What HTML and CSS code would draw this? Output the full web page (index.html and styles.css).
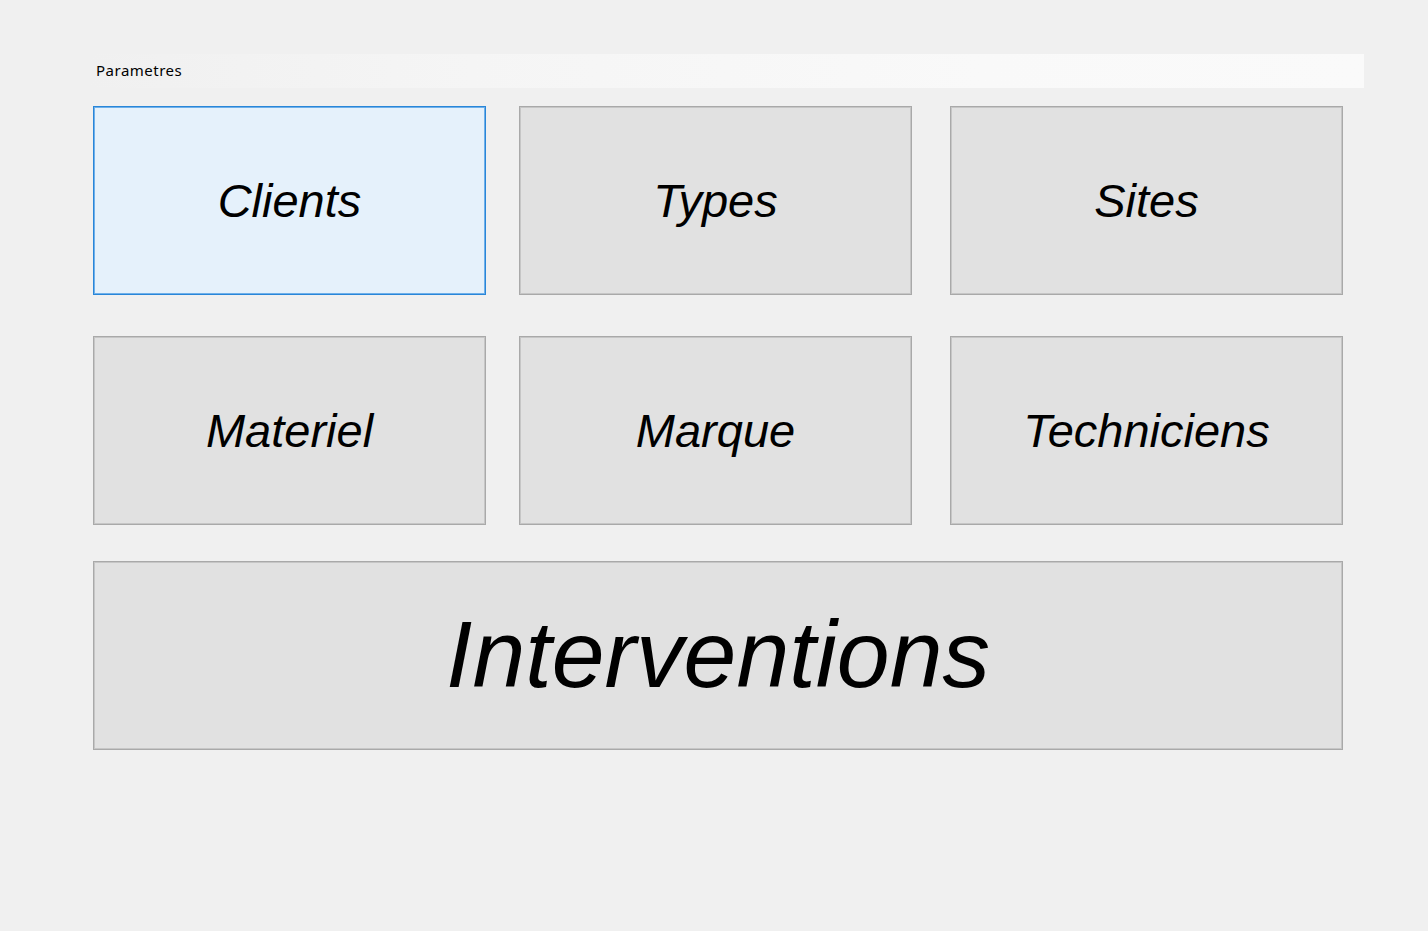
FILE: index.html
```html
<!DOCTYPE html>
<html lang="fr">
<head>
<meta charset="utf-8">
<title>Parametres</title>
<link rel="stylesheet" href="styles.css">
</head>
<body>
<div class="window">
  <div class="menustrip">
    <span class="menu-item">Parametres</span>
  </div>
  <div class="grid">
    <button class="btn hover">Clients</button>
    <button class="btn">Types</button>
    <button class="btn">Sites</button>
    <button class="btn">Materiel</button>
    <button class="btn">Marque</button>
    <button class="btn">Techniciens</button>
    <button class="btn big">Interventions</button>
  </div>
</div>
</body>
</html>
```

FILE: styles.css
```css
html, body {
  margin: 0;
  padding: 0;
  background: #f0f0f0;
  width: 1428px;
  height: 931px;
  overflow: hidden;
}

.window {
  padding: 54px 0 0 88px;
}

.menustrip {
  width: 1276px;
  height: 34px;
  display: flex;
  align-items: center;
  background: linear-gradient(to right, #f0f0f0 0%, #f5f5f5 30%, #f9f9f9 70%, #fafafa 100%);
}

.menu-item {
  font-family: "Noto Sans", "Open Sans", sans-serif;
  font-size: 15px;
  letter-spacing: 0.5px;
  color: #000;
  padding-left: 8px;
  padding-bottom: 2px;
}

.grid {
  margin-top: 18px;
  margin-left: 5px;
  display: grid;
  grid-template-columns: 426px 431px 393px;
  grid-template-rows: 230px 225px 189px;
}

.btn {
  width: 393px;
  height: 189px;
  box-sizing: border-box;
  background: #e1e1e1;
  border: 1px solid #a9a9a9;
  box-shadow: inset 0 0 0 1px #c6c6c6;
  font-family: "Liberation Sans", Arial, sans-serif;
  font-style: italic;
  font-size: 47px;
  color: #000;
  padding: 0;
  margin: 0;
  align-self: start;
  justify-self: start;
  display: flex;
  align-items: center;
  justify-content: center;
}

.btn.hover {
  background: #e5f1fb;
  border: 1px solid #2986d8;
  box-shadow: inset 0 0 0 1px #6fb0ea;
}

.btn.big {
  grid-column: 1 / 4;
  width: 1250px;
  font-size: 95px;
  padding-bottom: 2px;
}
```
